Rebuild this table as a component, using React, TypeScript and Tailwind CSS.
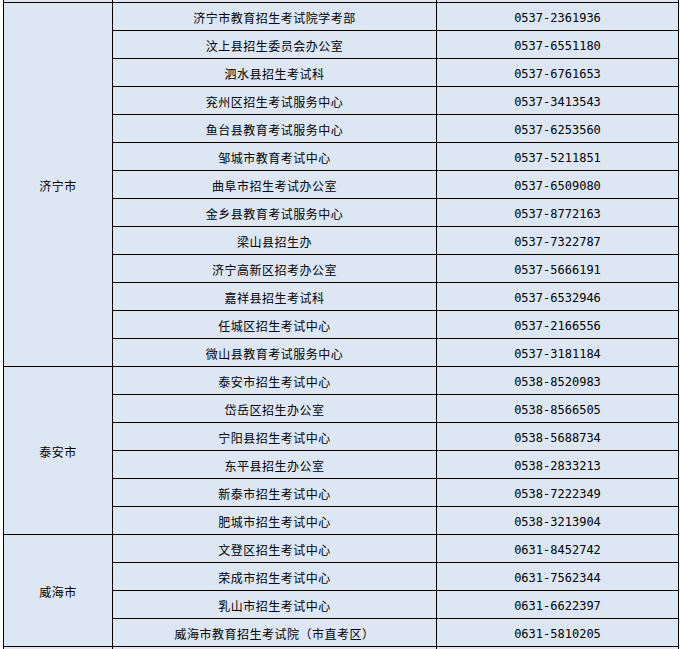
const groups: { city: string; rows: [string, string][] }[] = [
  {
    city: "济宁市",
    rows: [
      ["济宁市教育招生考试院学考部", "0537-2361936"],
      ["汶上县招生委员会办公室", "0537-6551180"],
      ["泗水县招生考试科", "0537-6761653"],
      ["兖州区招生考试服务中心", "0537-3413543"],
      ["鱼台县教育考试服务中心", "0537-6253560"],
      ["邹城市教育考试中心", "0537-5211851"],
      ["曲阜市招生考试办公室", "0537-6509080"],
      ["金乡县教育考试服务中心", "0537-8772163"],
      ["梁山县招生办", "0537-7322787"],
      ["济宁高新区招考办公室", "0537-5666191"],
      ["嘉祥县招生考试科", "0537-6532946"],
      ["任城区招生考试中心", "0537-2166556"],
      ["微山县教育考试服务中心", "0537-3181184"],
    ],
  },
  {
    city: "泰安市",
    rows: [
      ["泰安市招生考试中心", "0538-8520983"],
      ["岱岳区招生办公室", "0538-8566505"],
      ["宁阳县招生考试中心", "0538-5688734"],
      ["东平县招生办公室", "0538-2833213"],
      ["新泰市招生考试中心", "0538-7222349"],
      ["肥城市招生考试中心", "0538-3213904"],
    ],
  },
  {
    city: "威海市",
    rows: [
      ["文登区招生考试中心", "0631-8452742"],
      ["荣成市招生考试中心", "0631-7562344"],
      ["乳山市招生考试中心", "0631-6622397"],
      ["威海市教育招生考试院（市直考区）", "0631-5810205"],
    ],
  },
];

const span: Record<number, string> = {
  13: "row-span-[13]",
  6: "row-span-[6]",
  4: "row-span-[4]",
};

const cell = "bg-[#dde7f3] flex items-center justify-center text-black";

export default function App() {
  return (
    <div className="w-[682px] h-[649px] bg-white overflow-hidden pl-[3px]">
      <div className="w-[676px] grid grid-cols-[108px_323px_241px] grid-rows-[2px_repeat(23,27px)_2px] gap-px px-px bg-black font-['Noto_Sans_CJK_SC',sans-serif] text-[12px] leading-none">
        {/* tail of the row above */}
        <div className={cell} />
        <div className={cell} />
        <div className={cell} />

        {groups.map((g) => [
          <div key={g.city} className={`${cell} ${span[g.rows.length]} pt-[3px] tracking-[0.5px]`}>
            {g.city}
          </div>,
          ...g.rows.map(([name, phone], i) => [
            <div key={`${g.city}-n-${i}`} className={`${cell} pt-[3px] tracking-[0.5px]`}>
              {name}
            </div>,
            <div key={`${g.city}-p-${i}`} className={`${cell} pt-[3px] font-['DejaVu_Sans_Mono',monospace]`}>
              {phone}
            </div>,
          ]),
        ])}

        {/* head of the next row */}
        <div className={cell} />
        <div className={cell} />
        <div className={cell} />
      </div>
    </div>
  );
}
